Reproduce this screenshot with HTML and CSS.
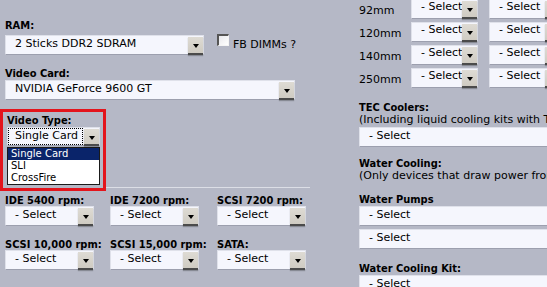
FILE: index.html
```html
<!DOCTYPE html>
<html>
<head>
<meta charset="utf-8">
<link rel="stylesheet" href="styles.css">
</head>
<body>
<div class="page">
  <div class="left">
    <div class="lbl l-ram">RAM:</div>
    <div class="row-ram">
      <div class="sel w-ram"><span class="val">2 Sticks DDR2 SDRAM</span><span class="btn"></span></div>
      <div class="chk"><span class="box"></span><span class="chk-text">FB DIMMs ?</span></div>
    </div>
    <div class="lbl l-vc">Video Card:</div>
    <div class="sel w-vc"><span class="val">NVIDIA GeForce 9600 GT</span><span class="btn"></span></div>
    <div class="vt-row">
      <div class="redbox">
        <div class="lbl l-vt">Video Type:</div>
        <div class="sel w-vt"><span class="val focus">Single Card</span><span class="btn"></span></div>
        <ul class="dd">
          <li class="on">Single Card</li>
          <li>SLI</li>
          <li>CrossFire</li>
        </ul>
      </div>
      <div class="rule"></div>
    </div>
    <div class="hd-grid">
      <div class="hd-cell"><div class="lbl l-hd">IDE 5400 rpm:</div><div class="sel w-hd"><span class="val">- Select</span><span class="btn"></span></div></div>
      <div class="hd-cell"><div class="lbl l-hd">IDE 7200 rpm:</div><div class="sel w-hd"><span class="val">- Select</span><span class="btn"></span></div></div>
      <div class="hd-cell"><div class="lbl l-hd">SCSI 7200 rpm:</div><div class="sel w-hd"><span class="val">- Select</span><span class="btn"></span></div></div>
      <div class="hd-cell"><div class="lbl l-hd">SCSI 10,000 rpm:</div><div class="sel w-hd"><span class="val">- Select</span><span class="btn"></span></div></div>
      <div class="hd-cell"><div class="lbl l-hd">SCSI 15,000 rpm:</div><div class="sel w-hd"><span class="val">- Select</span><span class="btn"></span></div></div>
      <div class="hd-cell"><div class="lbl l-hd">SATA:</div><div class="sel w-hd"><span class="val">- Select</span><span class="btn"></span></div></div>
    </div>
  </div>
  <div class="right">
    <div class="fans">
      <div class="fan-lbl">92mm</div>
      <div class="sel w-fan"><span class="val">- Select</span><span class="btn"></span></div>
      <div class="sel w-fan2"><span class="val">- Select</span><span class="btn"></span></div>
      <div class="fan-lbl">120mm</div>
      <div class="sel w-fan"><span class="val">- Select</span><span class="btn"></span></div>
      <div class="sel w-fan2"><span class="val">- Select</span><span class="btn"></span></div>
      <div class="fan-lbl">140mm</div>
      <div class="sel w-fan"><span class="val">- Select</span><span class="btn"></span></div>
      <div class="sel w-fan2"><span class="val">- Select</span><span class="btn"></span></div>
      <div class="fan-lbl">250mm</div>
      <div class="sel w-fan"><span class="val">- Select</span><span class="btn"></span></div>
      <div class="sel w-fan2"><span class="val">- Select</span><span class="btn"></span></div>
    </div>
    <div class="lbl r-lbl m-tec">TEC Coolers:</div>
    <div class="note">(Including liquid cooling kits with TEC)</div>
    <div class="sel w-wide m-sel1"><span class="val">- Select</span><span class="btn"></span></div>
    <div class="lbl r-lbl m-wc">Water Cooling:</div>
    <div class="note">(Only devices that draw power from the PSU)</div>
    <div class="lbl r-lbl m-wp">Water Pumps</div>
    <div class="sel w-wide"><span class="val">- Select</span><span class="btn"></span></div>
    <div class="sel w-wide m-sel2"><span class="val">- Select</span><span class="btn"></span></div>
    <div class="lbl r-lbl m-wk">Water Cooling Kit:</div>
    <div class="sel w-wide"><span class="val">- Select</span><span class="btn"></span></div>
  </div>
</div>
</body>
</html>
```

FILE: styles.css
```css
html, body {
  margin: 0;
  padding: 0;
  overflow: hidden;
}
body {
  background: #b5b8c6;
  font-family: "DejaVu Sans", Verdana, sans-serif;
  font-size: 11px;
  color: #000;
  width: 547px;
  height: 287px;
}
.page {
  display: flex;
  width: 547px;
  height: 287px;
  overflow: hidden;
}
.left {
  width: 354px;
  flex: none;
  padding-left: 5px;
  box-sizing: border-box;
}
.right {
  width: 240px;
  flex: none;
  padding-left: 5px;
  margin-top: -1px;
}
.lbl {
  font-family: "DejaVu Sans Condensed", "DejaVu Sans", sans-serif;
  font-weight: bold;
  line-height: 13px;
  white-space: nowrap;
}
.l-ram { margin-top: 19px; }
.row-ram {
  display: flex;
  align-items: flex-start;
  margin-top: 3px;
}
.chk {
  display: flex;
  align-items: flex-start;
  margin-left: 13px;
  margin-top: -1px;
}
.chk .box {
  width: 12px;
  height: 12px;
  box-sizing: border-box;
  border-top: 2px solid #555;
  border-left: 2px solid #555;
  border-right: 1px solid #f4f4f4;
  border-bottom: 1px solid #f4f4f4;
  background: linear-gradient(135deg, #e8e8ec, #ffffff);
}
.chk-text {
  margin-left: 4px;
  margin-top: 4px;
  line-height: 13px;
}
.l-vc { margin-top: 13px; line-height: 12px; }

/* select look */
.sel {
  display: flex;
  height: 20px;
  box-sizing: border-box;
  background: #f5f6fd;
  border: 1px solid #dfe1ea;
  border-bottom-color: #9c9fae;
  white-space: nowrap;
}
.sel .val {
  flex: 1;
  min-width: 0;
  overflow: hidden;
  padding: 1px 0 0 9px;
  line-height: 13px;
}
.sel .btn {
  flex: none;
  width: 15px;
  background: linear-gradient(#dedbd4, #cfcbc2);
  border-bottom: 2px solid #4b4b4b;
  box-shadow: 0 1px 1px rgba(0,0,0,0.25);
  display: flex;
  align-items: center;
  justify-content: center;
  margin: 1px 0 -1px 0;
}
.sel .btn::after {
  content: "";
  width: 0;
  height: 0;
  border-left: 3.5px solid transparent;
  border-right: 3.5px solid transparent;
  border-top: 4px solid #000;
  margin-top: 2px;
}
.w-ram { width: 199px; }
.w-vc { width: 290px; }
.w-hd { width: 89px; }
.w-fan { width: 67px; }
.w-fan2 { width: 72px; }
.w-wide { width: 230px; }

/* video type */
.vt-row {
  display: flex;
  align-items: flex-end;
  width: 310px;
  margin-left: -5px;
  margin-top: 9px;
}
.redbox {
  flex: none;
  width: 106px;
  height: 82px;
  box-sizing: border-box;
  border: 3px solid #e3141c;
  padding: 3px 0 0 4px;
}
.l-vt { line-height: 12px; }
.w-vt {
  width: 93px;
  height: 19px;
}
.w-vt .val.focus {
  padding: 0 0 0 6px;
  border: 1px dotted #000;
  margin: 0 1px 0 0;
}
.dd {
  list-style: none;
  margin: 1px 0 0 0;
  padding: 0;
  width: 93px;
  box-sizing: border-box;
  border: 1px solid #1a1a1a;
  background: #fff;
  font-size: 10px;
}
.dd li {
  height: 12px;
  line-height: 12px;
  padding-left: 3px;
}
.dd li.on {
  background: #0a246a;
  color: #fff;
}
.rule {
  flex: 1;
  height: 1px;
  background: #dcdee6;
  margin-bottom: 3px;
}

/* hard drives */
.hd-grid {
  display: grid;
  grid-template-columns: 105px 107px 100px;
  row-gap: 13px;
  margin-top: 4px;
}
.l-hd { line-height: 11px; }

/* right column */
.fans {
  display: grid;
  grid-template-columns: 52px 67px 72px;
  row-gap: 3px;
}
.fans .w-fan2 { margin-left: 11px; }
.fan-lbl {
  padding-top: 5px;
  line-height: 13px;
}
.w-fan .val, .w-fan2 .val { padding-top: 0; }
.r-lbl { line-height: 12px; }
.note { line-height: 12px; white-space: nowrap; }
.m-tec { margin-top: 14px; }
.m-sel1 { margin-top: 1px; }
.m-wc { margin-top: 11px; }
.m-wp { margin-top: 12px; }
.m-sel2 { margin-top: 3px; }
.m-wk { margin-top: 14px; }
```
